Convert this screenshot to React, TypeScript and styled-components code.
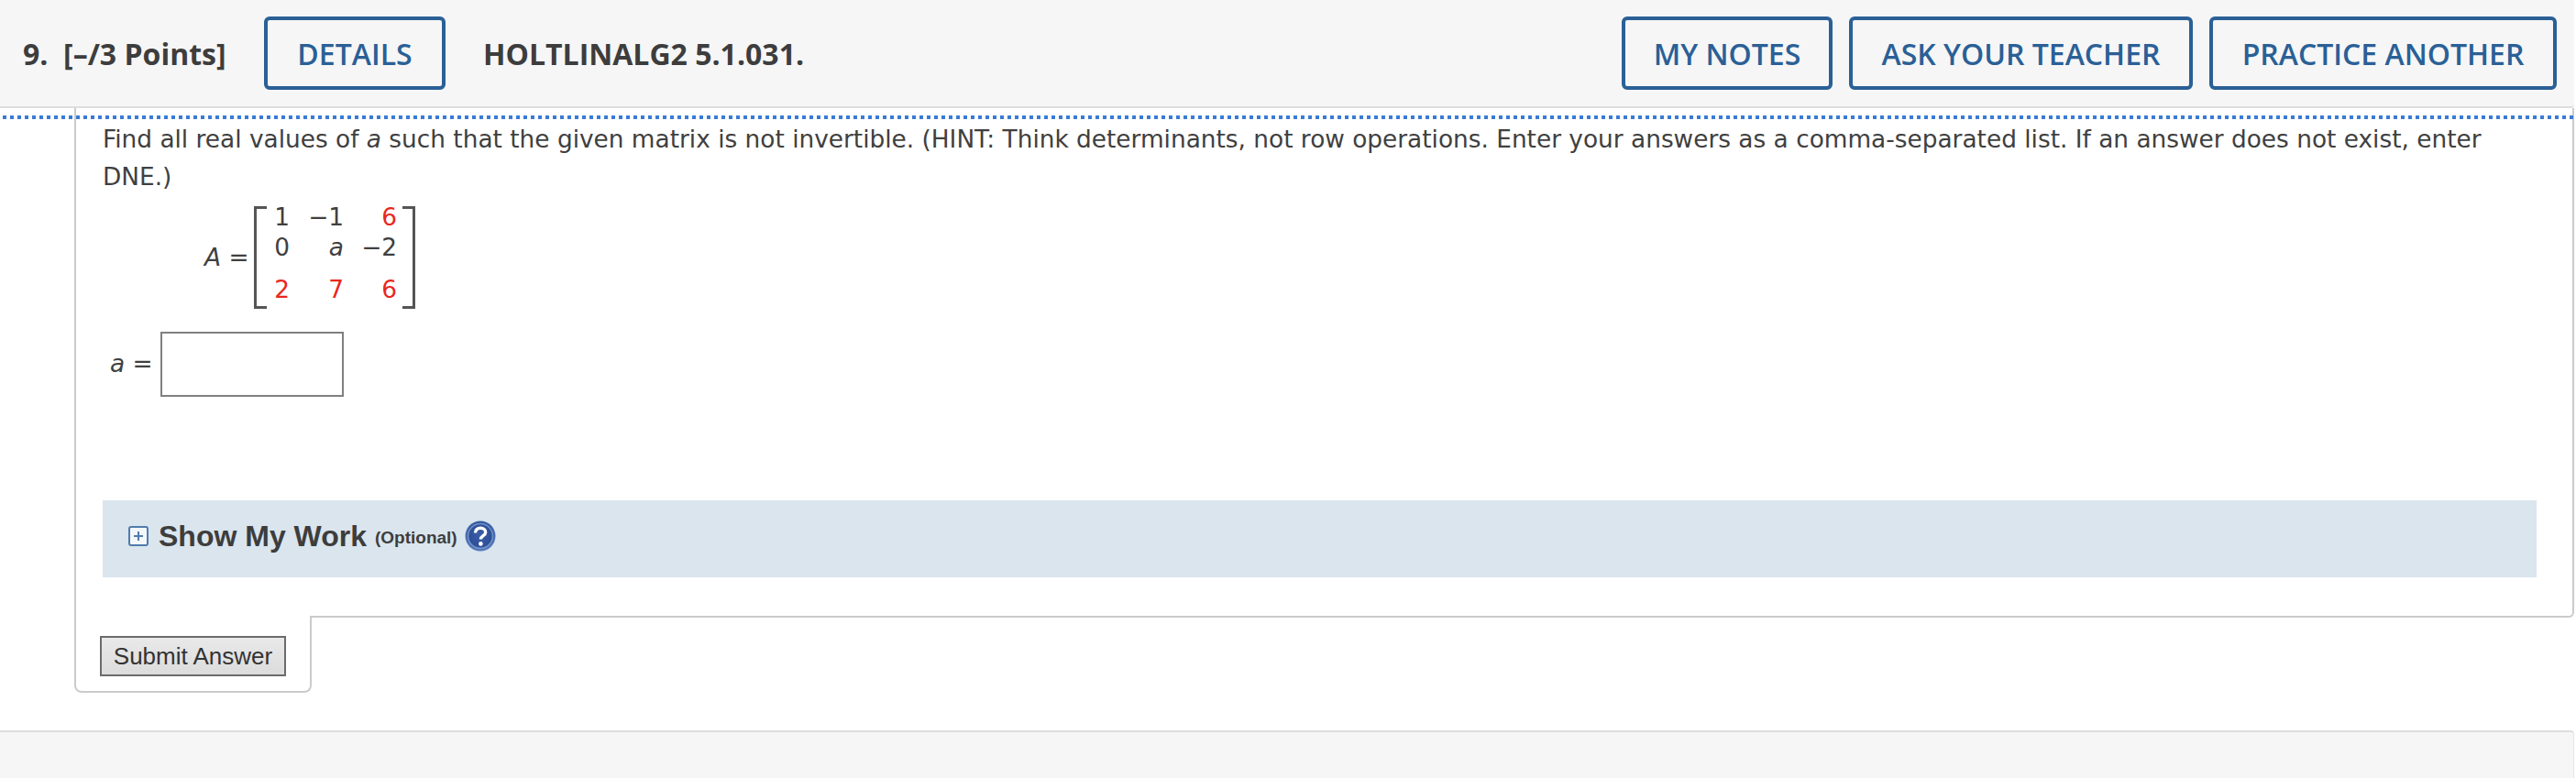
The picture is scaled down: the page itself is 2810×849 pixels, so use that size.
import styled, { createGlobalStyle } from 'styled-components';

const GlobalStyle = createGlobalStyle`
  html, body {
    margin: 0;
    padding: 0;
    background: #fff;
  }
  body {
    overflow: hidden;
    color: #404040;
  }
`;

const Page = styled.div`
  position: relative;
  width: 2810px;
  height: 849px;
  overflow: hidden;
  background: #fff;
`;

const Header = styled.header`
  box-sizing: border-box;
  width: 2808px;
  height: 118px;
  display: flex;
  align-items: center;
  padding: 0 19px 0 25px;
  background: #f6f6f6;
  border-bottom: 2px solid #dedede;
  border-radius: 0 0 4px 0;
  font-family: 'Open Sans', sans-serif;
  font-size: 32px;
  color: #3d3d3d;
`;

const Points = styled.span`
  font-weight: 700;
  white-space: pre;
  width: 263px;
`;

const Code = styled.span`
  font-weight: 700;
  margin-left: 41px;
  flex: 1;
`;

const OutlineButton = styled.button<{ $w: number }>`
  box-sizing: border-box;
  width: ${p => p.$w}px;
  height: 80px;
  padding: 0;
  background: transparent;
  border: 4px solid #2a6096;
  border-radius: 6px;
  color: #2a6096;
  font: 600 32px 'Open Sans', sans-serif;
`;

const ButtonGroup = styled.div`
  display: flex;
  gap: 18px;
`;

const FocusDots = styled.div`
  position: absolute;
  left: 0;
  top: 126px;
  width: 2808px;
  height: 4px;
  background: repeating-linear-gradient(90deg, #3a7bd5 0 4px, transparent 4px 8px) 3px 0;
`;

const Panel = styled.section`
  box-sizing: border-box;
  width: 2727px;
  height: 556px;
  margin-left: 81px;
  padding: 14px 39px 0 29px;
  border: 2px solid #cbcbcb;
  border-top: 0;
  border-radius: 0 0 6px 0;
  font-family: 'DejaVu Sans', sans-serif;
  font-size: 26.36px;
  line-height: 41px;
`;

const Question = styled.p`
  margin: 0;
  width: 2640px;
`;

const MatrixRow = styled.div`
  display: flex;
  align-items: center;
  margin: 11px 0 0 111px;
  height: 112px;
`;

const Symbol = styled.span`
  line-height: 30px;
  width: 54px;
  white-space: pre;
`;

const Bracketed = styled.div`
  position: relative;
  box-sizing: border-box;
  width: 176px;
  height: 112px;
  display: grid;
  grid-template-columns: 36px 59px 58px;
  grid-template-rows: 33px 33px 37px;
  border-left: 3px solid #555;
  border-right: 3px solid #555;
  line-height: 24px;
  &::before, &::after {
    content: '';
    position: absolute;
    top: 0;
    bottom: 0;
    width: 11px;
    border-top: 3px solid #555;
    border-bottom: 3px solid #555;
    box-sizing: border-box;
  }
  &::before { left: 0; }
  &::after { right: 0; }
`;

const Cell = styled.span<{ $red?: boolean; $low?: boolean }>`
  text-align: right;
  white-space: pre;
  color: ${p => (p.$red ? '#e8281e' : '#404040')};
  align-self: ${p => (p.$low ? 'end' : 'start')};
`;

const AnswerRow = styled.div`
  display: flex;
  align-items: center;
  margin-top: 25px;
  padding-left: 8px;
`;

const AnswerLabel = styled.label`
  width: 55px;
  white-space: pre;
`;

const AnswerInput = styled.input`
  box-sizing: border-box;
  width: 200px;
  height: 71px;
  background: #fff;
  border: 2px solid #808080;
  border-radius: 0;
`;

const WorkBar = styled.div`
  box-sizing: border-box;
  height: 84px;
  margin-top: 113px;
  display: flex;
  align-items: center;
  padding: 0 0 7px 28px;
  background: #dae5ee;
  font-family: 'Liberation Sans', sans-serif;
`;

const WorkTitle = styled.span`
  margin-left: 11px;
  font-size: 32px;
  line-height: 40px;
  font-weight: 700;
  color: #3d3d3d;
`;

const WorkNote = styled.span`
  margin: 4px 0 0 9px;
  font-size: 19px;
  font-weight: 700;
  color: #3d3d3d;
`;

const HelpWrap = styled.span`
  display: flex;
  margin-left: 8px;
`;

const SubmitTab = styled.div`
  position: relative;
  box-sizing: border-box;
  width: 259px;
  height: 84px;
  margin: -2px 0 0 81px;
  padding: 22px 0 0 26px;
  background: #fff;
  border: 2px solid #cbcbcb;
  border-top: 0;
  border-radius: 0 0 8px 8px;
`;

const SubmitButton = styled.button`
  display: block;
  box-sizing: border-box;
  width: 203px;
  height: 44px;
  padding: 0;
  background: linear-gradient(#e9e9e9, #dcdcdc);
  border: 2px solid #6b6b6b;
  border-radius: 0;
  color: #333;
  font: 26px 'Liberation Sans', sans-serif;
`;

const Footer = styled.footer`
  box-sizing: border-box;
  width: 2808px;
  height: 52px;
  margin-top: 41px;
  background: #f6f6f6;
  border-top: 2px solid #dedede;
  border-right: 1px solid #e4e4e4;
  border-radius: 0 4px 0 0;
`;

const PlusIcon = () => (
  <svg width="22" height="22" viewBox="0 0 22 22">
    <rect x="1" y="1" width="20" height="20" rx="2" fill="#f4f7fa" stroke="#4f7cac" strokeWidth="2" />
    <path d="M6 11h10M11 6v10" stroke="#4f7cac" strokeWidth="2" />
  </svg>
);

const HelpIcon = () => (
  <svg width="34" height="34" viewBox="0 0 34 34">
    <defs>
      <radialGradient id="helpFill" cx="50%" cy="45%" r="55%">
        <stop offset="0%" stopColor="#3a5ea6" />
        <stop offset="70%" stopColor="#2f4f98" />
        <stop offset="100%" stopColor="#5f86c4" />
      </radialGradient>
    </defs>
    <circle cx="17" cy="17" r="16.5" fill="url(#helpFill)" />
    <circle cx="17" cy="17" r="13.5" fill="none" stroke="#86a8d8" strokeWidth="1.5" opacity="0.75" />
    <path d="M11.5 13.5c0-3.4 2.4-5.2 5.6-5.2s5.6 1.8 5.6 4.5c0 4-5.3 3.8-5.3 7.7" fill="none" stroke="#fff" strokeWidth="3.4" />
    <circle cx="17.4" cy="25.4" r="2.3" fill="#fff" />
  </svg>
);

export default function App() {
  return (
    <Page>
      <GlobalStyle />
      <Header>
        <Points>{'9.  [–/3 Points]'}</Points>
        <OutlineButton $w={198}>DETAILS</OutlineButton>
        <Code>HOLTLINALG2 5.1.031.</Code>
        <ButtonGroup>
          <OutlineButton $w={230}>MY NOTES</OutlineButton>
          <OutlineButton $w={375}>ASK YOUR TEACHER</OutlineButton>
          <OutlineButton $w={379}>PRACTICE ANOTHER</OutlineButton>
        </ButtonGroup>
      </Header>
      <FocusDots />
      <Panel>
        <Question>
          Find all real values of <i>a</i> such that the given matrix is not invertible. (HINT: Think determinants, not
          row operations. Enter your answers as a comma-separated list. If an answer does not exist, enter DNE.)
        </Question>
        <MatrixRow>
          <Symbol>
            <i>A</i> {'='}
          </Symbol>
          <Bracketed>
            <Cell>1</Cell>
            <Cell>−1</Cell>
            <Cell $red>6</Cell>
            <Cell>0</Cell>
            <Cell>
              <i>a</i>
            </Cell>
            <Cell>−2</Cell>
            <Cell $red $low>2</Cell>
            <Cell $red $low>7</Cell>
            <Cell $red $low>6</Cell>
          </Bracketed>
        </MatrixRow>
        <AnswerRow>
          <AnswerLabel>
            <i>a</i> {'='}
          </AnswerLabel>
          <AnswerInput type="text" aria-label="a" />
        </AnswerRow>
        <WorkBar>
          <PlusIcon />
          <WorkTitle>Show My Work</WorkTitle>
          <WorkNote>(Optional)</WorkNote>
          <HelpWrap>
            <HelpIcon />
          </HelpWrap>
        </WorkBar>
      </Panel>
      <SubmitTab>
        <SubmitButton type="button">Submit Answer</SubmitButton>
      </SubmitTab>
      <Footer />
    </Page>
  );
}
